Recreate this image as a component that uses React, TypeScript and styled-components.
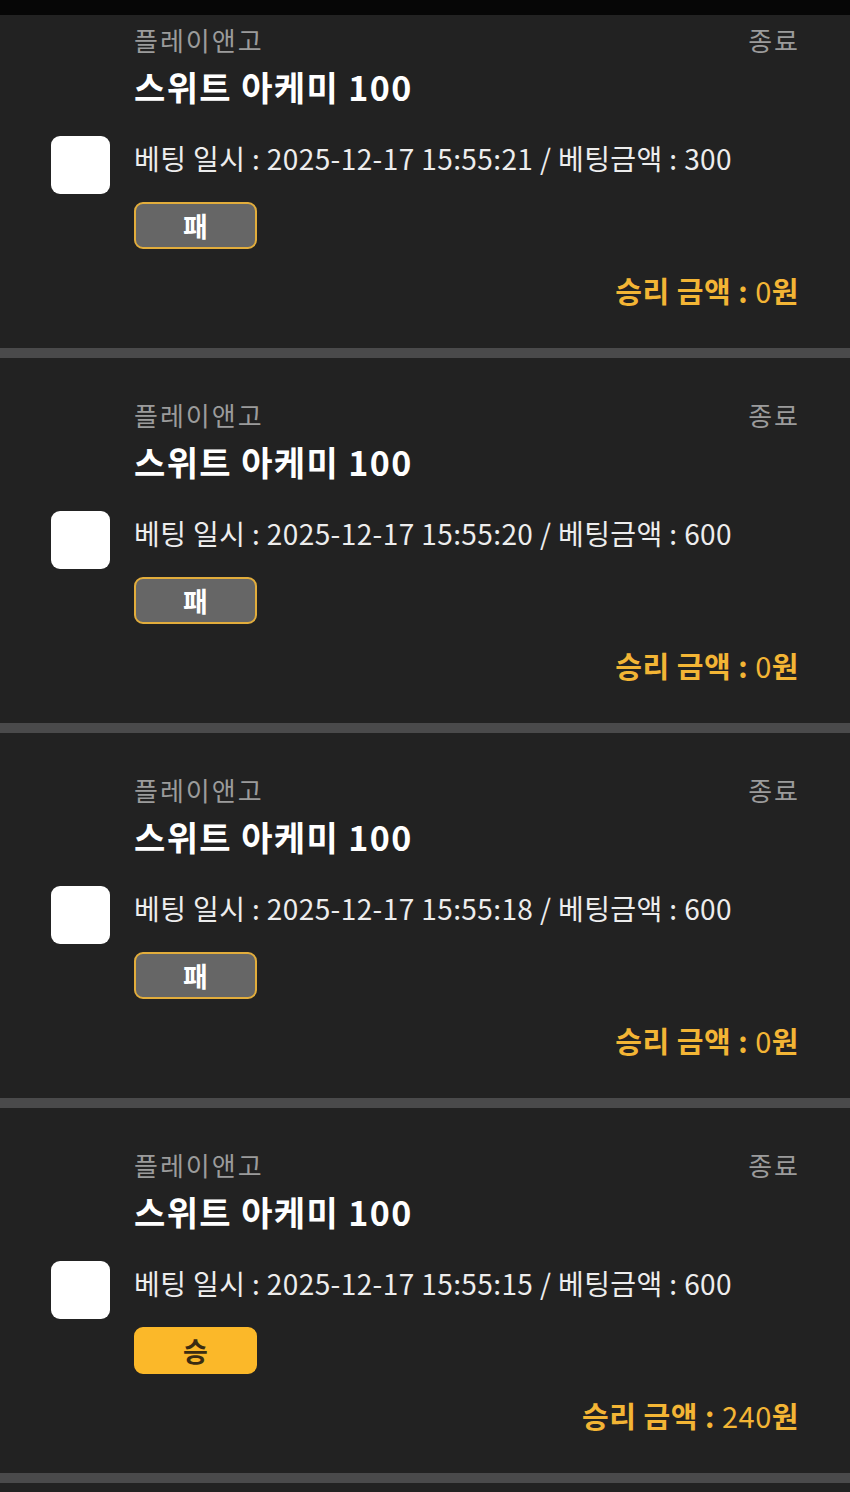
import { useLayoutEffect, useRef } from 'react'
import styled, { createGlobalStyle } from 'styled-components'

const GlobalStyle = createGlobalStyle`
  html, body { margin: 0; padding: 0; background: #222222; }
  body { font-family: "Noto Sans CJK KR", "Noto Sans", sans-serif; }
  * { box-sizing: border-box; }
`

type Bet = {
  id: number
  provider: string
  status: string
  game: string
  time: string
  stake: number
  won: boolean
  payout: number
}

const BETS: Bet[] = [
  { id: 1, provider: '플레이앤고', status: '종료', game: '스위트 아케미 100', time: '2025-12-17 15:55:21', stake: 300, won: false, payout: 0 },
  { id: 2, provider: '플레이앤고', status: '종료', game: '스위트 아케미 100', time: '2025-12-17 15:55:20', stake: 600, won: false, payout: 0 },
  { id: 3, provider: '플레이앤고', status: '종료', game: '스위트 아케미 100', time: '2025-12-17 15:55:18', stake: 600, won: false, payout: 0 },
  { id: 4, provider: '플레이앤고', status: '종료', game: '스위트 아케미 100', time: '2025-12-17 15:55:15', stake: 600, won: true, payout: 240 },
  { id: 5, provider: '플레이앤고', status: '종료', game: '스위트 아케미 100', time: '2025-12-17 15:55:12', stake: 600, won: false, payout: 0 },
]

const Screen = styled.div`
  height: 100vh;
  display: flex;
  flex-direction: column;
  overflow: hidden;
  background: #222222;
`

const StatusBar = styled.div`
  height: 15px;
  flex: none;
  background: #060606;
`

const Feed = styled.div`
  flex: 1;
  overflow-y: auto;
  scrollbar-width: none;
  &::-webkit-scrollbar { display: none; }
`

const Card = styled.div`
  padding: 39px 52px 38px 51px;
  background: #222222;
  border-bottom: 10px solid #4a4a4b;
`

const CardGrid = styled.div`
  display: grid;
  grid-template-columns: 59px 1fr;
  column-gap: 24px;
  grid-template-areas:
    '. head'
    '. title'
    'thumb info'
    '. result'
    '. amount';
`

const Header = styled.div`
  grid-area: head;
  display: flex;
  justify-content: space-between;
  align-items: center;
  font-size: 26px;
  line-height: 36px;
  letter-spacing: 2px;
  color: #9b9b9b;
`

const StatusText = styled.span`
  margin-right: -2px;
`

const Title = styled.div`
  grid-area: title;
  margin-top: 9px;
  font-size: 34px;
  line-height: 40px;
  letter-spacing: 1.4px;
  font-weight: 700;
  color: #ffffff;
`

const Thumb = styled.div`
  grid-area: thumb;
  margin-top: 29px;
  width: 59px;
  height: 58px;
  border-radius: 9px;
  background: #ffffff;
`

const Info = styled.div`
  grid-area: info;
  margin-top: 29px;
  font-size: 28px;
  line-height: 44px;
  letter-spacing: 0.4px;
  color: #ededed;
  white-space: nowrap;
`

const ResultBadge = styled.div<{ $won: boolean }>`
  grid-area: result;
  margin-top: 8px;
  width: 123px;
  height: 47px;
  display: flex;
  align-items: center;
  justify-content: center;
  border-radius: 9px;
  font-size: 27px;
  font-weight: 700;
  border: 2.5px solid ${p => (p.$won ? '#fbb829' : '#e2ad3c')};
  background: ${p => (p.$won ? '#fbb829' : '#666666')};
  color: ${p => (p.$won ? '#3a2c12' : '#ffffff')};
`

const Payout = styled.div`
  grid-area: amount;
  margin-top: 21px;
  margin-right: -1px;
  text-align: right;
  font-size: 29px;
  line-height: 40px;
  letter-spacing: 0.5px;
  color: #f3b535;
  white-space: nowrap;
`

const PayoutLabel = styled.span`
  font-weight: 700;
`

const PayoutValue = styled.span`
  font-weight: 400;
`

function BetCard({ bet }: { bet: Bet }) {
  return <Card>
    <CardGrid>
      <Header>
        <span>{bet.provider}</span>
        <StatusText>{bet.status}</StatusText>
      </Header>
      <Title>{bet.game}</Title>
      <Thumb />
      <Info>베팅 일시 : {bet.time} / 베팅금액 : {bet.stake}</Info>
      <ResultBadge $won={bet.won}>{bet.won ? '승' : '패'}</ResultBadge>
      <Payout>
        <PayoutLabel>승리 금액 : </PayoutLabel>
        <PayoutValue>{bet.payout}</PayoutValue>
        <PayoutLabel>원</PayoutLabel>
      </Payout>
    </CardGrid>
  </Card>
}

export default function App() {
  const feedRef = useRef<HTMLDivElement>(null)

  // the list is shown scrolled a little past its top
  useLayoutEffect(() => {
    if (feedRef.current) feedRef.current.scrollTop = 32
  }, [])

  return <Screen>
    <GlobalStyle />
    <StatusBar />
    <Feed ref={feedRef}>
      {BETS.map(b => <BetCard key={b.id} bet={b} />)}
    </Feed>
  </Screen>
}
